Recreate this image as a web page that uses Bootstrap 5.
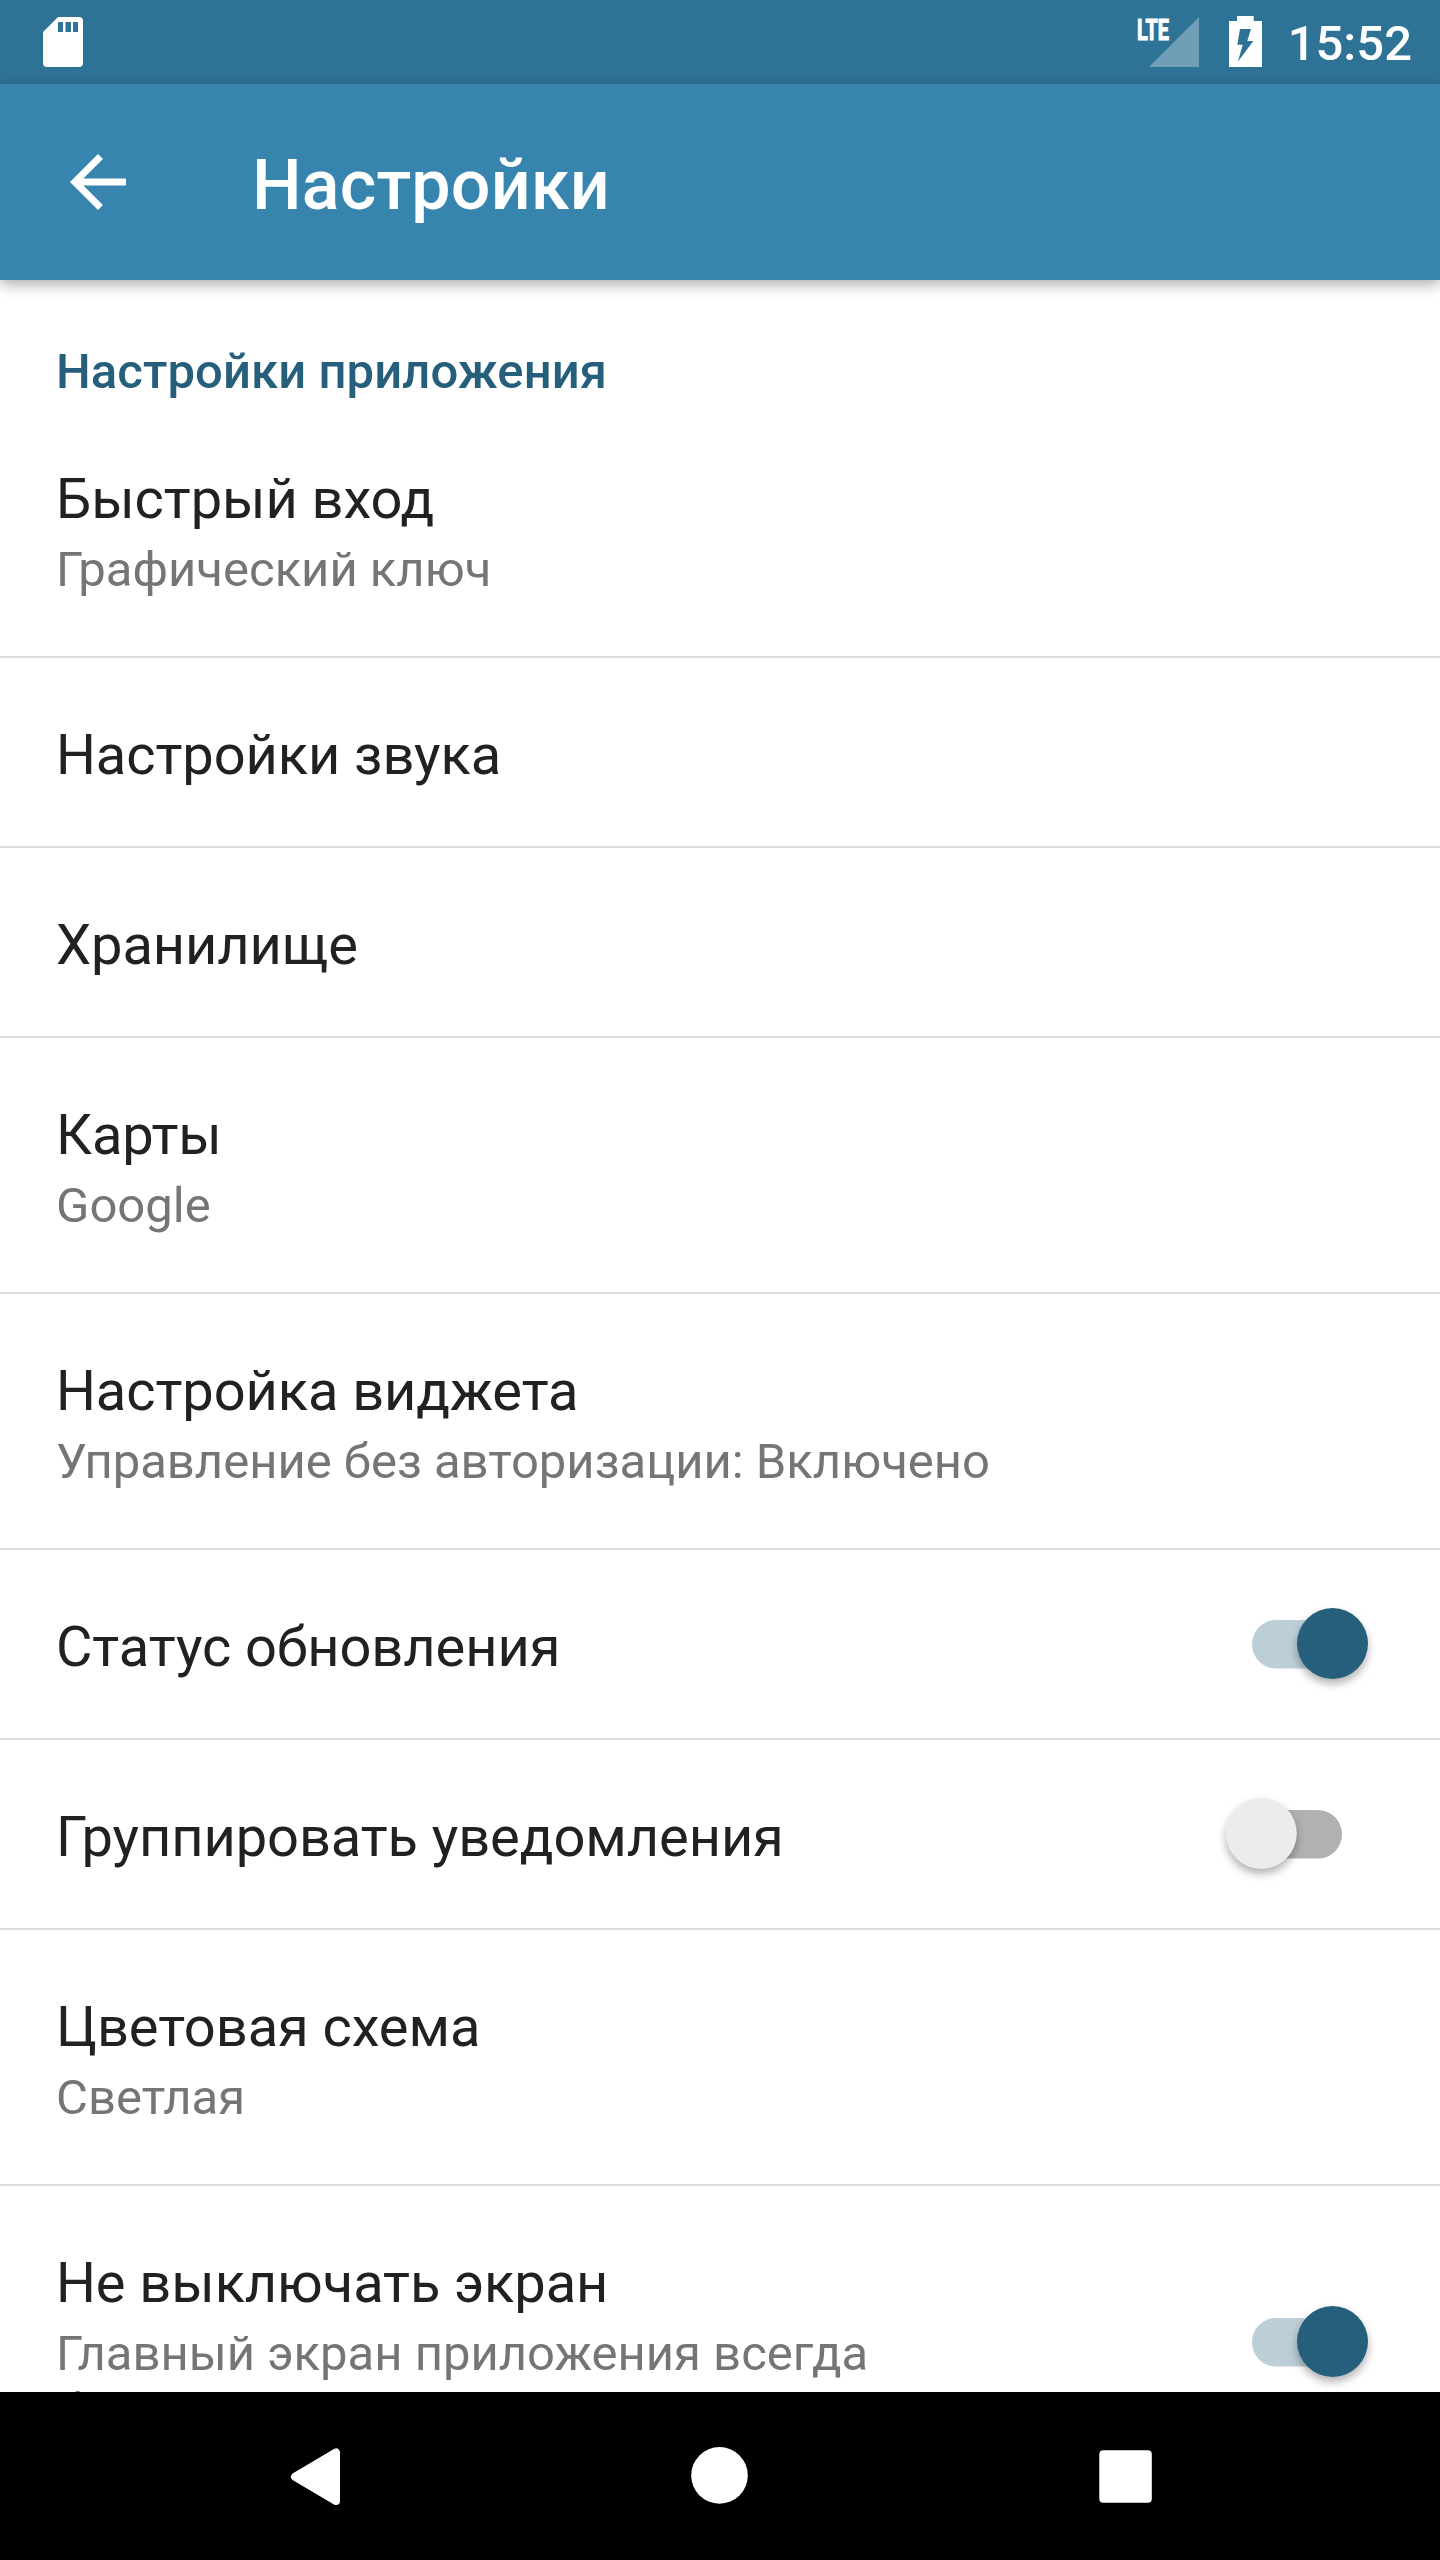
<!DOCTYPE html>
<html lang="ru">
<head>
<meta charset="utf-8">
<title>Настройки</title>
<link rel="stylesheet" href="https://cdn.jsdelivr.net/npm/bootstrap@5.3.0/dist/css/bootstrap.min.css">
<style>
body{font-family:Roboto,sans-serif;background:#fff;color:#212121}
.phone{width:1440px;height:2560px;overflow:hidden}
.statusbar{height:84px;background:#2e7396;padding:0 28px 0 43px;color:#fff}
.clock{font-size:49px;font-weight:500;line-height:58px;padding-top:15px}
.signal{margin-right:28px}
.battery{margin-right:25px}
.appbar{height:196px;background:#3785af;padding:4px 0 0 56px;box-shadow:0 4px 14px rgba(0,0,0,.35);z-index:2}
.appbar-title{font-size:70px;font-weight:500;line-height:82px;color:#fff;letter-spacing:.15px;padding-top:1px}
.back{width:84px;height:84px;margin-right:112px;margin-top:-4px}
.section-title{height:122px;padding:63px 56px 0;font-size:49px;line-height:58px;font-weight:500;color:#265f7c;letter-spacing:.08px}
.pref{padding:59px 56px 53px;border-bottom:2px solid #dcdcdc}
.pref-single{height:190px}
.pref-title{font-size:56px;line-height:76px;letter-spacing:-.08px}
.pref-sub{font-size:49px;line-height:58px;color:#757575;height:66px;padding-top:4px}
.pref-sub.tall{height:123px}
.pref-text{max-width:900px}
.toggle{width:164px;height:90px;margin:-7px 0 -1px;overflow:visible}
.toggle circle{filter:drop-shadow(0 5px 4px rgba(0,0,0,.3))}
.navkeys{height:168px;background:#000;gap:321px}
</style>
<script src="https://cdn.jsdelivr.net/npm/bootstrap@5.3.0/dist/js/bootstrap.bundle.min.js"></script>
</head>
<body>
<div class="phone d-flex flex-column">
  <div class="statusbar d-flex align-items-start flex-shrink-0">
    <svg class="me-auto" width="42" height="84" viewBox="0 0 42 84"><path fill="#fff" fill-rule="evenodd" d="M15 17H36Q40 17 40 21V63Q40 67 36 67H4Q0 67 0 63V32ZM15 22V32H20V22ZM22.500 22V32H28V22ZM30 22V32H35V22Z"/></svg>
    <svg class="signal" width="64" height="84" viewBox="0 0 64 84"><path fill="#6f9eb6" d="M62 17V67H12Z"/><text x="0" y="39.600" font-size="30" font-weight="700" fill="#fff" stroke="#fff" stroke-width="1.200" textLength="32" lengthAdjust="spacingAndGlyphs">LTE</text></svg>
    <svg class="battery" width="34" height="84" viewBox="0 0 34 84"><path fill="#fff" fill-rule="evenodd" d="M8 16H24.700V21H33V67H0V21H8ZM11 29L8.300 44.700H13.700L9 61.500L24.300 41H18.300L22 29Z"/></svg>
    <div class="clock">15:52</div>
  </div>
  <header class="appbar d-flex align-items-center flex-shrink-0 position-relative">
    <svg class="back" viewBox="0 0 24 24"><path fill="#fff" d="M20 11H7.830l5.590-5.590L12 4l-8 8 8 8 1.410-1.410L7.830 13H20v-2z"/></svg>
    <div class="appbar-title">Настройки</div>
  </header>
  <main class="flex-grow-1 overflow-hidden">
    <div class="section-title">Настройки приложения</div>
    <div class="pref"><div class="pref-title">Быстрый вход</div><div class="pref-sub">Графический ключ</div></div>
    <div class="pref"><div class="pref-title">Настройки звука</div></div>
    <div class="pref"><div class="pref-title">Хранилище</div></div>
    <div class="pref"><div class="pref-title">Карты</div><div class="pref-sub">Google</div></div>
    <div class="pref"><div class="pref-title">Настройка виджета</div><div class="pref-sub">Управление без авторизации: Включено</div></div>
    <div class="pref pref-single d-flex justify-content-between align-items-center"><div class="pref-title">Статус обновления</div>
      <svg class="toggle" viewBox="0 0 164 90"><rect x="32" y="21" width="106" height="48.500" rx="24.200" fill="#bcced8"/><circle cx="112.500" cy="44.500" r="35.500" fill="#265f7c"/></svg></div>
    <div class="pref pref-single d-flex justify-content-between align-items-center"><div class="pref-title">Группировать уведомления</div>
      <svg class="toggle" viewBox="0 0 164 90"><rect x="16" y="21" width="106" height="48.500" rx="24.200" fill="#b1b1b1"/><circle cx="41.300" cy="44.500" r="35.500" fill="#ececec"/></svg></div>
    <div class="pref"><div class="pref-title">Цветовая схема</div><div class="pref-sub">Светлая</div></div>
    <div class="pref d-flex justify-content-between align-items-center"><div class="pref-text"><div class="pref-title">Не выключать экран</div><div class="pref-sub tall">Главный экран приложения всегда будет включен</div></div>
      <svg class="toggle" viewBox="0 0 164 90"><rect x="32" y="21" width="106" height="48.500" rx="24.200" fill="#bcced8"/><circle cx="112.500" cy="44.500" r="35.500" fill="#265f7c"/></svg></div>
  </main>
  <nav class="navkeys d-flex justify-content-center align-items-center flex-shrink-0 position-relative">
    <svg width="84" height="84" viewBox="0 0 84 84"><path fill="#fff" stroke="#fff" stroke-width="8" stroke-linejoin="round" d="M22 42.700L63 18.500V67Z"/></svg>
    <svg width="84" height="84" viewBox="0 0 84 84"><circle cx="41.500" cy="41.400" r="28.300" fill="#fff"/></svg>
    <svg width="84" height="84" viewBox="0 0 84 84"><rect x="16.300" y="16.200" width="52.500" height="52.500" rx="4" fill="#fff"/></svg>
  </nav>
</div>
</body>
</html>
